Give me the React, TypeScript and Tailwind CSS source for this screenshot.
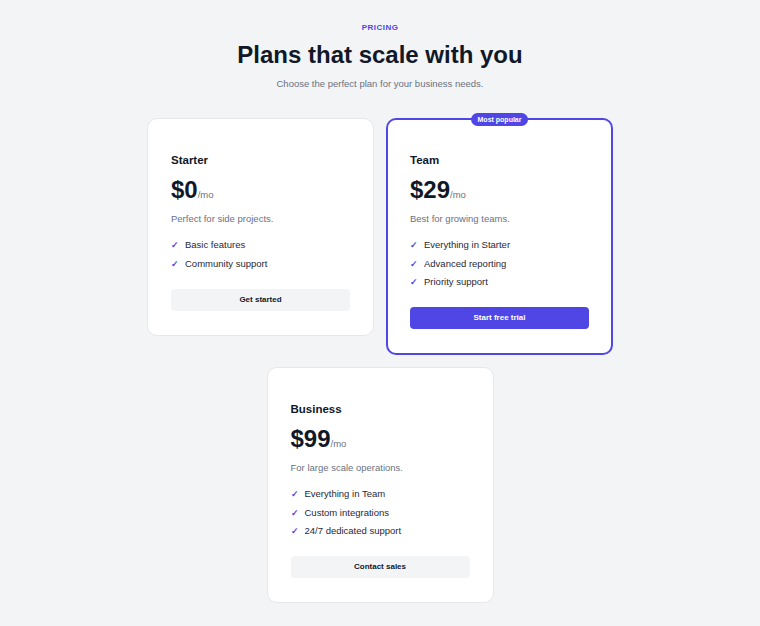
const plans = [
  {
    name: "Starter",
    price: "$0",
    blurb: "Perfect for side projects.",
    features: ["Basic features", "Community support"],
    cta: "Get started",
    featured: false,
  },
  {
    name: "Team",
    price: "$29",
    blurb: "Best for growing teams.",
    features: ["Everything in Starter", "Advanced reporting", "Priority support"],
    cta: "Start free trial",
    featured: true,
  },
  {
    name: "Business",
    price: "$99",
    blurb: "For large scale operations.",
    features: ["Everything in Team", "Custom integrations", "24/7 dedicated support"],
    cta: "Contact sales",
    featured: false,
  },
];

type Plan = (typeof plans)[number];

function PlanCard({ plan }: { plan: Plan }) {
  return (
    <div
      className={
        plan.featured
          ? "relative w-[227px] rounded-[10px] border-2 border-[#4f46e5] bg-white px-[22px] pb-[24px] pt-[32px]"
          : "relative w-[227px] rounded-[10px] border border-[#e5e7eb] bg-white px-[23px] pb-[24px] pt-[33px]"
      }
    >
      {plan.featured && (
        <span className="absolute left-1/2 top-[-7px] -translate-x-1/2 rounded-full bg-[#4f46e5] px-[7px] text-[7px] font-bold leading-[13px] text-white">
          Most popular
        </span>
      )}
      <h3 className="text-[11.5px] font-bold leading-4 text-[#111827]">{plan.name}</h3>
      <div className="mt-[8px] flex items-baseline">
        <span className="text-[24px] font-bold leading-7 text-[#111827]">{plan.price}</span>
        <span className="text-[9.5px] text-[#6b7280]">/mo</span>
      </div>
      <p className="mt-[8px] text-[9.5px] leading-[14px] text-[#6b7280]">{plan.blurb}</p>
      <ul className="mt-[12px] flex flex-col gap-[4.5px]">
        {plan.features.map((f) => (
          <li key={f} className="flex items-center text-[9.5px] leading-[14px] text-[#1f2937]">
            <span className="w-[14px] text-[9px] font-bold text-[#4f46e5]">✓</span>
            {f}
          </li>
        ))}
      </ul>
      <button
        className={
          plan.featured
            ? "mt-[18px] h-[22px] w-full rounded-[4px] bg-[#4f46e5] text-[8px] font-bold text-white"
            : "mt-[18px] h-[22px] w-full rounded-[4px] bg-[#f3f4f6] text-[8px] font-bold text-[#111827]"
        }
      >
        {plan.cta}
      </button>
    </div>
  );
}

export default function App() {
  return (
    <div
      className="min-h-[626px] bg-[#f3f4f6] pt-[22px] text-center"
      style={{ fontFamily: '"Liberation Sans", Arial, sans-serif' }}
    >
      <p className="text-[8px] font-bold leading-3 tracking-[0.06em] text-[#4f46e5]">PRICING</p>
      <h1 className="mt-[5px] text-[24px] font-bold leading-8 text-[#111827]">Plans that scale with you</h1>
      <p className="mt-[6px] text-[9.5px] leading-[14px] text-[#6b7280]">
        Choose the perfect plan for your business needs.
      </p>
      <div className="mx-auto mt-[27px] flex w-[466px] flex-wrap items-start justify-center gap-3 text-left">
        {plans.map((p) => (
          <PlanCard key={p.name} plan={p} />
        ))}
      </div>
    </div>
  );
}
